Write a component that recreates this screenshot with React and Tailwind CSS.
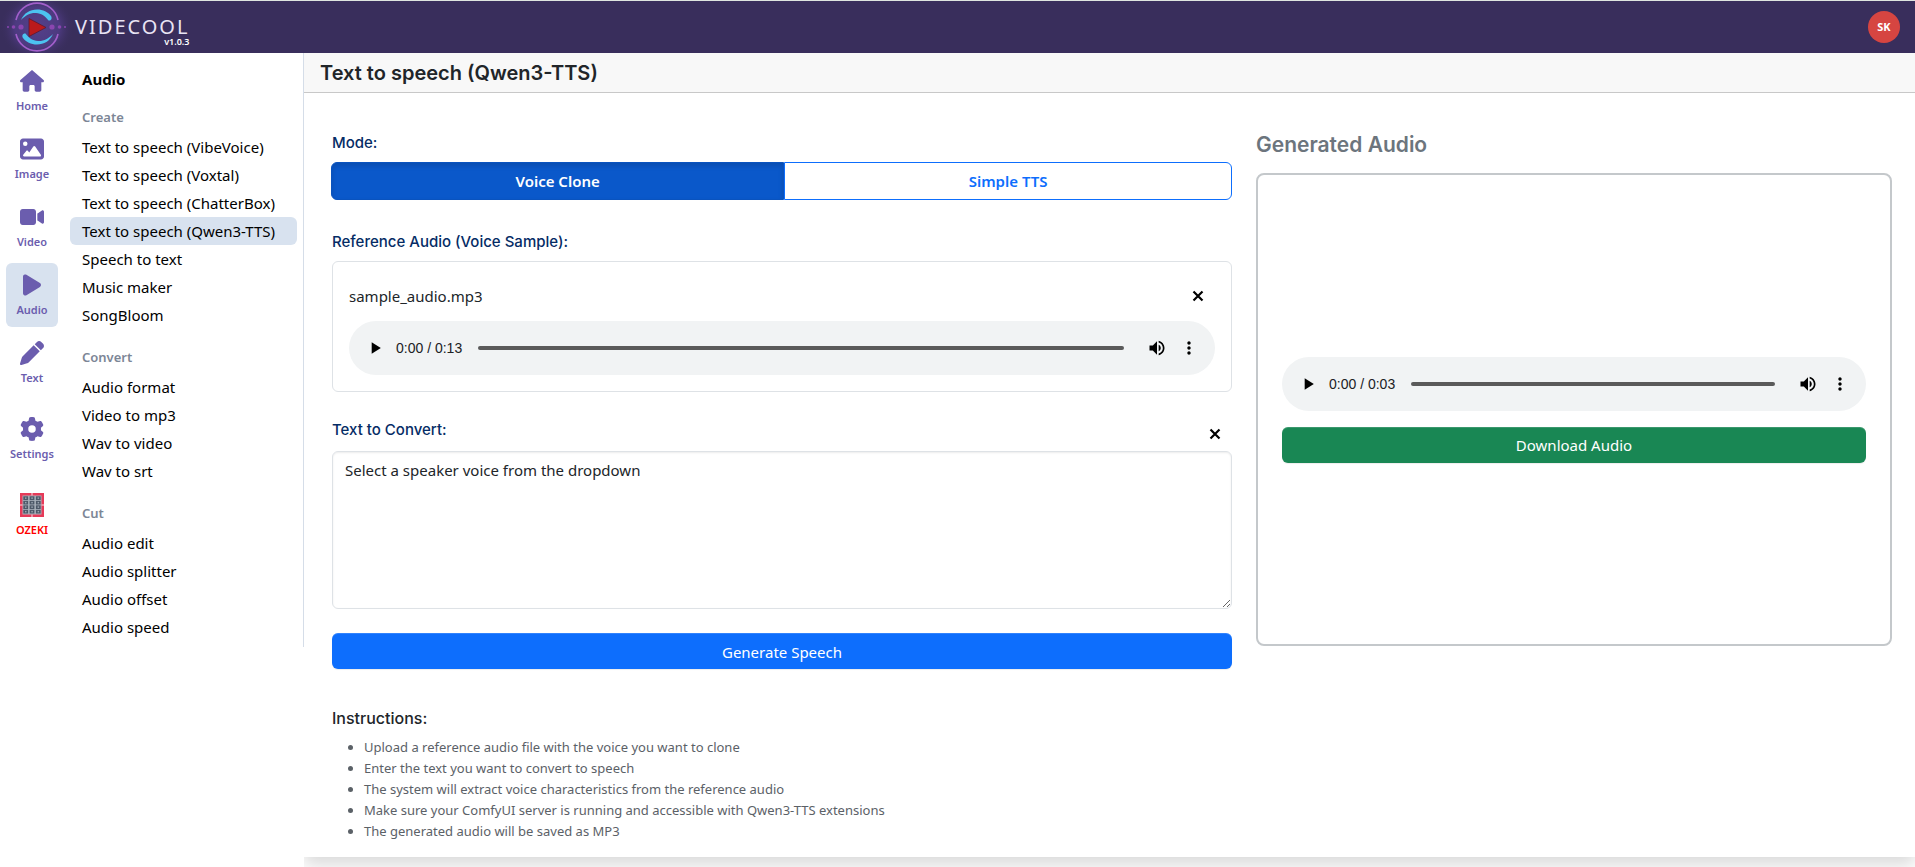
import React, { useState } from 'react';
import { FaHouse, FaImage, FaVideo, FaPlay, FaPen, FaGear } from 'react-icons/fa6';
import clsx from 'clsx';

const OzekiIcon = () => (
  <svg width="24" height="24" viewBox="0 0 24 24">
    <rect width="24" height="24" fill="#e63a58" />
    <rect x="2.500" y="2.500" width="19" height="19" fill="#aab2bc" />
    <path d="M11.500 0h1v2.500h-1zM11.500 21.500h1V24h-1zM0 11.500h2.500v1H0zM21.500 11.500H24v1h-2.500z" fill="#f8dfe3" />
    {[3.3, 7.8, 12.3, 16.8].map((y) =>
      [3.3, 9.6, 15.9].map((x) => (
        <g key={`${x}-${y}`}>
          <rect x={x} y={y} width="4.800" height="3.700" fill="#4d5868" />
          <rect x={x + 1.7} y={y + 1.1} width="1.500" height="1.500" fill="#9ba5b1" />
        </g>
      ))
    )}
  </svg>
);

const Logo = () => (
  <svg width="75" height="52" viewBox="0 0 75 52" className="shrink-0">
    <defs>
      <radialGradient id="glow">
        <stop offset="0" stopColor="#54408a" />
        <stop offset="0.6" stopColor="#4d3a80" />
        <stop offset="1" stopColor="#392e5c" stopOpacity="0" />
      </radialGradient>
    </defs>
    <ellipse cx="37" cy="26" rx="37" ry="34" fill="url(#glow)" />
    <g fill="none" stroke="#a25fcb" strokeWidth="1.6">
      <path d="M16 19a21.500 21.500 0 0 1 42 0" />
      <path d="M16 33a21.500 21.500 0 0 0 42 0" />
    </g>
    <g fill="#4cc3f0">
      <path d="M21 19c3-7 9-10.500 16-10.500 6 0 11 2.500 14 6.500 1.500 2.500 0 5-2.500 4.500-4-5-7-7-12.500-7.500-6-.3-10 2-15 7z" />
      <path d="M53 33c-3 7-9 10.500-16 10.500-6 0-11-2.500-14-6.500-1.500-2.500 0-5 2.500-4.500 4 5 7 7 12.500 7.500 6 .3 10-2 15-7z" />
    </g>
    <path d="M29 17.500v18l17-9z" fill="#bb1a1c" stroke="#5e1830" strokeWidth="0.8" />
    <g fill="#8a46b0">
      <circle cx="21" cy="26" r="2.600" />
      <circle cx="52" cy="26" r="2.600" />
      <circle cx="13.500" cy="26" r="1.800" />
      <circle cx="59.500" cy="26" r="1.800" />
      <circle cx="8" cy="26" r="1" />
      <circle cx="65" cy="26" r="1" />
    </g>
  </svg>
);

const CloseIcon = () => (
  <svg width="12" height="12" viewBox="0 0 12 12" fill="none" stroke="#000" strokeWidth="2.2">
    <path d="M1.500 1.500l9 9M10.500 1.500l-9 9" />
  </svg>
);

const navItems = [
  { id: 'home', label: 'Home', icon: <FaHouse size={24} /> },
  { id: 'image', label: 'Image', icon: <FaImage size={24} /> },
  { id: 'video', label: 'Video', icon: <FaVideo size={24} /> },
  { id: 'audio', label: 'Audio', icon: <FaPlay size={24} /> },
  { id: 'text', label: 'Text', icon: <FaPen size={24} /> },
  { id: 'settings', label: 'Settings', icon: <FaGear size={24} />, spaced: true },
  { id: 'ozeki', label: 'OZEKI', icon: <OzekiIcon />, spaced: true, brand: true },
];

const menuGroups = [
  {
    title: 'Create',
    items: [
      'Text to speech (VibeVoice)',
      'Text to speech (Voxtal)',
      'Text to speech (ChatterBox)',
      'Text to speech (Qwen3-TTS)',
      'Speech to text',
      'Music maker',
      'SongBloom',
    ],
  },
  { title: 'Convert', items: ['Audio format', 'Video to mp3', 'Wav to video', 'Wav to srt'] },
  { title: 'Cut', items: ['Audio edit', 'Audio splitter', 'Audio offset', 'Audio speed'] },
];

const instructions = [
  'Upload a reference audio file with the voice you want to clone',
  'Enter the text you want to convert to speech',
  'The system will extract voice characteristics from the reference audio',
  'Make sure your ComfyUI server is running and accessible with Qwen3-TTS extensions',
  'The generated audio will be saved as MP3',
];

const AudioPlayer = ({ duration, label }) => (
  <div className="flex h-[54px] w-full items-center rounded-full bg-[#f1f3f4] px-[10px]">
    <button type="button" aria-label="Play" className="flex h-8 w-8 shrink-0 items-center justify-center">
      <svg width="20" height="20" viewBox="0 0 24 24"><path d="M8 5v14l11-7z" /></svg>
    </button>
    <span className="ml-[5px] w-[82px] shrink-0 whitespace-nowrap font-['Liberation_Sans',sans-serif] text-sm text-[#202124]">
      0:00 / {duration}
    </span>
    <input
      type="range"
      defaultValue={0}
      aria-label={label}
      className="h-1 min-w-0 flex-1 appearance-none rounded-full bg-[#5a5a5a] [&::-webkit-slider-thumb]:w-0 [&::-webkit-slider-thumb]:appearance-none"
    />
    <button type="button" aria-label="Mute" className="ml-[17px] flex h-8 w-8 shrink-0 items-center justify-center">
      <svg width="20" height="20" viewBox="0 0 24 24">
        <path d="M3 9v6h4l5 5V4L7 9H3zm13.500 3c0-1.770-1.020-3.290-2.500-4.030v8.050c1.480-.73 2.500-2.250 2.500-4.020zM14 3.230v2.060c2.890.86 5 3.540 5 6.710s-2.110 5.850-5 6.710v2.060c4.010-.91 7-4.490 7-8.770s-2.990-7.860-7-8.770z" />
      </svg>
    </button>
    <button type="button" aria-label="More options" className="flex h-8 w-8 shrink-0 items-center justify-center">
      <svg width="20" height="20" viewBox="0 0 24 24">
        <path d="M12 8c1.100 0 2-.9 2-2s-.9-2-2-2-2 .9-2 2 .9 2 2 2zm0 2c-1.100 0-2 .9-2 2s.9 2 2 2 2-.9 2-2-.9-2-2-2zm0 6c-1.100 0-2 .9-2 2s.9 2 2 2 2-.9 2-2-.9-2-2-2z" />
      </svg>
    </button>
  </div>
);

const Header = () => (
  <header className="flex h-[53px] items-center justify-between border-t border-[#dfe5e0] bg-[#392e5c] pr-[15px]">
    <a href="#home" className="flex items-end text-[#e9e4f4]">
      <Logo />
      <span className="flex flex-col pb-[6px]">
        <span className="text-xl leading-5 tracking-widest">VIDECOOL</span>
        <span className="self-end text-[9px] leading-[10px] font-semibold text-white">v1.0.3</span>
      </span>
    </a>
    <button type="button" className="h-8 w-8 rounded-full bg-[#d64541] text-[11px] font-bold text-white">SK</button>
  </header>
);

const NavRail = ({ active, onSelect }) => (
  <nav className="flex w-16 shrink-0 flex-col items-center gap-1 pt-[6px]">
    {navItems.map((item) => (
      <button
        key={item.id}
        type="button"
        onClick={() => onSelect(item.id)}
        className={clsx(
          'flex h-16 w-[52px] flex-col items-center gap-1 rounded-md pt-[10px] text-[11px] leading-[18px] font-semibold',
          item.brand ? 'text-[#ff0000]' : 'text-[#6b5dae]',
          item.spaced && 'mt-2',
          active === item.id && 'bg-[#d8e2ef]'
        )}
      >
        {item.icon}
        <span>{item.label}</span>
      </button>
    ))}
  </nav>
);

const SideMenu = ({ active, onSelect }) => (
  <aside className="w-60 shrink-0 border-r border-[#d5dde8] pt-[14px] pr-[6px] pb-[6px] pl-[6px]">
    <h2 className="px-3 text-[15px] leading-6 font-bold text-black">Audio</h2>
    {menuGroups.map((group, i) => (
      <section key={group.title} className={i === 0 ? 'mt-4' : 'mt-[18px]'}>
        <h3 className="px-3 pb-[6px] text-[13px] leading-5 font-semibold text-[#7c8696]">{group.title}</h3>
        <ul>
          {group.items.map((item) => (
            <li key={item}>
              <a
                href="#menu"
                onClick={() => onSelect(item)}
                className={clsx(
                  'block rounded-md px-3 text-[15px] leading-7 whitespace-nowrap text-black',
                  active === item && 'bg-[#d8e2ef]'
                )}
              >
                {item}
              </a>
            </li>
          ))}
        </ul>
      </section>
    ))}
  </aside>
);

const modes = ['Voice Clone', 'Simple TTS'];
const labelClass = "font-['Inter',sans-serif] text-[15px] leading-5 font-medium text-[#052c65]";

const SpeechForm = () => {
  const [mode, setMode] = useState('Voice Clone');
  const [text, setText] = useState('Select a speaker voice from the dropdown');

  return (
    <form className="col-span-7" onSubmit={(e) => e.preventDefault()}>
      <p id="mode" className={labelClass}>Mode:</p>
      <div role="group" aria-labelledby="mode" className="mt-[9px] -ml-px flex h-[38px]">
        {modes.map((name) => (
          <button
            key={name}
            type="button"
            onClick={() => setMode(name)}
            className={clsx(
              'flex-auto border text-[15px] font-semibold first:rounded-l-md last:rounded-r-md',
              mode === name
                ? 'border-[#0a53be] bg-[#0a58ca] text-white shadow-[inset_0_3px_5px_rgba(0,0,0,0.125)]'
                : 'border-[#0d6efd] bg-white text-[#0d6efd]'
            )}
          >
            {name}
          </button>
        ))}
      </div>

      <p className={clsx(labelClass, 'mt-8')}>Reference Audio (Voice Sample):</p>
      <div className="mt-[9px] rounded-md border border-[#dee2e6] p-4">
        <div className="flex h-[43px] items-center justify-between pr-[11px] pb-[7px] text-[#212529]">
          <span className="text-[15px]">sample_audio.mp3</span>
          <button type="button" aria-label="Remove audio"><CloseIcon /></button>
        </div>
        <AudioPlayer duration="0:13" label="Reference audio position" />
      </div>

      <div className="mt-7 flex items-start justify-between pr-[11px]">
        <label htmlFor="speech-text" className={labelClass}>Text to Convert:</label>
        <button type="button" aria-label="Clear text" className="mt-2"><CloseIcon /></button>
      </div>
      <textarea
        id="speech-text"
        value={text}
        onChange={(e) => setText(e.target.value)}
        className="mt-[11px] block h-[158px] w-full rounded-md border border-[#dee2e6] px-3 py-[6px] text-[15px] leading-6 text-[#212529] shadow-[inset_0_1px_2px_rgba(0,0,0,0.075)]"
      />
      <button
        type="submit"
        className="mt-6 h-9 w-full rounded-md bg-[#0d6efd] pt-[2px] text-[15px] text-white shadow-[inset_0_1px_0_rgba(255,255,255,0.15),0_1px_1px_rgba(0,0,0,0.075)]"
      >
        Generate Speech
      </button>

      <h4 className="mt-[39px] font-['Inter',sans-serif] text-base leading-5 font-medium text-[#212529]">Instructions:</h4>
      <ul className="mt-[9px] list-disc pl-8 text-[13px] leading-[21px] text-[#5b6167]">
        {instructions.map((line) => (
          <li key={line}>{line}</li>
        ))}
      </ul>
    </form>
  );
};

const GeneratedAudio = () => (
  <section className="col-span-5">
    <h3 className="font-['Inter',sans-serif] text-[21px] leading-6 font-semibold text-[#6c757d]">Generated Audio</h3>
    <div className="mt-4 flex min-h-[473px] flex-col justify-center gap-4 rounded-lg border-2 border-[#c4c8cb] p-6">
      <AudioPlayer duration="0:03" label="Generated audio position" />
      <button
        type="button"
        className="h-9 w-full rounded-md bg-[#198754] pt-[2px] text-[15px] text-white shadow-[inset_0_1px_0_rgba(255,255,255,0.15),0_1px_1px_rgba(0,0,0,0.075)]"
      >
        Download Audio
      </button>
    </div>
  </section>
);

const App = () => {
  const [activeNav, setActiveNav] = useState('audio');
  const [activeItem, setActiveItem] = useState('Text to speech (Qwen3-TTS)');

  return (
    <div className="bg-white font-['Noto_Sans',sans-serif]">
      <Header />
      <div className="flex items-start">
        <NavRail active={activeNav} onSelect={setActiveNav} />
        <SideMenu active={activeItem} onSelect={setActiveItem} />

        {/* Main Workspace */}
        <div className="min-w-0 flex-1 overflow-hidden pb-[10px]">
          <main className="bg-white shadow-[0_8px_16px_rgba(0,0,0,0.15)]">
            <h1 className="border-b border-[#c8c8c8] bg-[#f8f8f8] px-4 pt-2 pb-[7px] font-['Inter',sans-serif] text-xl leading-6 font-semibold text-[#212529]">
              Text to speech (Qwen3-TTS)
            </h1>
            <div className="grid grid-cols-12 gap-6 pt-10 pr-[23px] pb-[15px] pl-7">
              <SpeechForm />
              <GeneratedAudio />
            </div>
          </main>
        </div>
      </div>
    </div>
  );
};

export default App;
